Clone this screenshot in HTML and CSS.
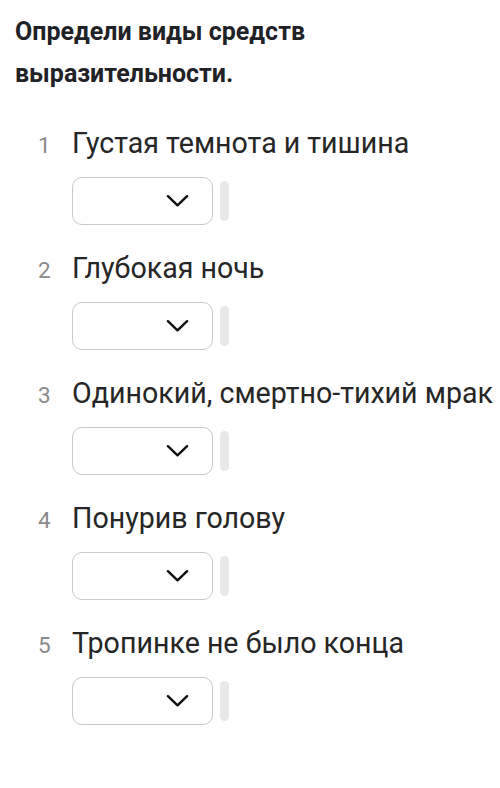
FILE: index.html
```html
<!DOCTYPE html>
<html lang="ru">
<head>
<meta charset="utf-8">
<link rel="stylesheet" href="styles.css">
</head>
<body>
<h1 class="title">Определи виды средств выразительности.</h1>
<ol class="items">
  <li class="item">
    <div class="row"><span class="num">1</span><span class="text">Густая темнота и тишина</span></div>
    <div class="controls"><div class="select"><svg class="chev" viewBox="0 0 24 14"><path d="M2 2 L12 11.5 L22 2"/></svg></div><div class="bar"></div></div>
  </li>
  <li class="item">
    <div class="row"><span class="num">2</span><span class="text">Глубокая ночь</span></div>
    <div class="controls"><div class="select"><svg class="chev" viewBox="0 0 24 14"><path d="M2 2 L12 11.5 L22 2"/></svg></div><div class="bar"></div></div>
  </li>
  <li class="item">
    <div class="row"><span class="num">3</span><span class="text">Одинокий, смертно-тихий мрак</span></div>
    <div class="controls"><div class="select"><svg class="chev" viewBox="0 0 24 14"><path d="M2 2 L12 11.5 L22 2"/></svg></div><div class="bar"></div></div>
  </li>
  <li class="item">
    <div class="row"><span class="num">4</span><span class="text">Понурив голову</span></div>
    <div class="controls"><div class="select"><svg class="chev" viewBox="0 0 24 14"><path d="M2 2 L12 11.5 L22 2"/></svg></div><div class="bar"></div></div>
  </li>
  <li class="item">
    <div class="row"><span class="num">5</span><span class="text">Тропинке не было конца</span></div>
    <div class="controls"><div class="select"><svg class="chev" viewBox="0 0 24 14"><path d="M2 2 L12 11.5 L22 2"/></svg></div><div class="bar"></div></div>
  </li>
</ol>
</body>
</html>
```
FILE: styles.css
```css
html, body {
  margin: 0;
  padding: 0;
  background: #ffffff;
}
body {
  font-family: Roboto, "Noto Sans", sans-serif;
  color: #222222;
  padding: 0 15px;
  overflow: hidden;
  white-space: nowrap;
}
.title {
  margin: 11px 0 0 0;
  font-family: Roboto, sans-serif;
  font-weight: 700;
  font-size: 25px;
  line-height: 42px;
  color: #1f2226;
  white-space: normal;
  width: 345px;
}
.items {
  list-style: none;
  margin: 32px 0 0 0;
  padding: 0 0 0 22px;
}
.item {
  height: 125px;
}
.row {
  display: flex;
  align-items: baseline;
  height: 32px;
  line-height: 32px;
  font-size: 28.6px;
}
.num {
  flex: 0 0 35px;
  width: 35px;
  color: #8a8a8a;
  font-size: 22.5px;
  padding-left: 1px;
  box-sizing: border-box;
}
.text {
  flex: 0 0 auto;
  color: #262626;
}
.controls {
  display: flex;
  align-items: center;
  gap: 7px;
  margin: 17.5px 0 0 35px;
}
.select {
  width: 141px;
  height: 48px;
  box-sizing: border-box;
  border: 1.5px solid #c9c9c9;
  border-radius: 10px;
  display: flex;
  align-items: center;
  justify-content: flex-end;
  padding-right: 23px;
}
.chev {
  width: 23px;
  height: 14px;
  fill: none;
  stroke: #111111;
  stroke-width: 2.6;
  stroke-linecap: round;
  stroke-linejoin: round;
}
.bar {
  width: 9px;
  height: 40px;
  border-radius: 5px;
  background: #e8e8e8;
}
```
